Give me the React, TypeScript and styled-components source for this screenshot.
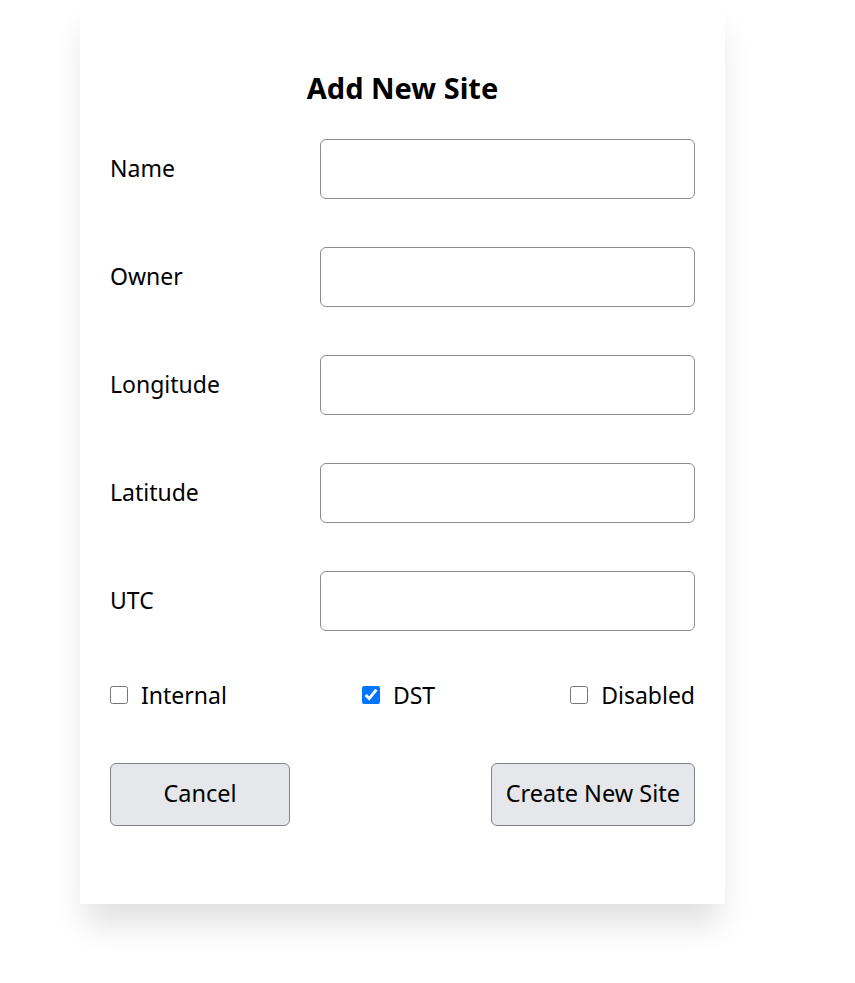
import React from "react";
import styled, { createGlobalStyle } from "styled-components";

const GlobalStyle = createGlobalStyle`
  html, body {
    margin: 0;
    padding: 0;
    background: #ffffff;
    font-family: "Noto Sans", "Open Sans", sans-serif;
    color: #000;
  }
`;

const Page = styled.div`
  padding: 0 0 79px 80px;
  width: 645px;
`;

const Card = styled.form`
  width: 645px;
  box-sizing: border-box;
  background: #fff;
  padding: 70px 30px 78px;
  box-shadow: 0 25px 30px -5px rgba(0, 0, 0, 0.12);
  display: flex;
  flex-direction: column;
`;

const Title = styled.h2`
  margin: 0 0 33px;
  font-size: 29px;
  line-height: 36px;
  font-weight: 700;
  text-align: center;
`;

const Fields = styled.div`
  display: grid;
  grid-template-columns: 1fr 375px;
  row-gap: 48px;
  align-items: center;
`;

const Label = styled.label`
  font-size: 23px;
  line-height: 30px;
  margin-top: -3px;
`;

const Input = styled.input`
  box-sizing: border-box;
  width: 375px;
  height: 60px;
  border: 1px solid #8c8c8c;
  border-radius: 6px;
  padding: 0 12px;
  font: inherit;
  font-size: 20px;
  background: #fff;
  outline: none;
`;

const Checks = styled.div`
  margin-top: 49px;
  display: flex;
  justify-content: space-between;
  align-items: center;
  height: 30px;
`;

const CheckLabel = styled.label`
  display: flex;
  align-items: center;
  gap: 13px;
  font-size: 23px;
  line-height: 30px;
`;

const Box = styled.input`
  margin: 0;
  width: 18px;
  height: 18px;
`;

const Actions = styled.div`
  margin-top: 53px;
  display: flex;
  justify-content: space-between;
`;

const Button = styled.button`
  box-sizing: border-box;
  min-width: 180px;
  height: 63px;
  padding: 0 14px 3px;
  background: #e5e7eb;
  border: 1px solid #80838a;
  border-radius: 6px;
  font: inherit;
  font-size: 23.5px;
  color: #000;
  cursor: pointer;
`;

const fields = ["Name", "Owner", "Longitude", "Latitude", "UTC"];

export default function App() {
  return (
    <>
      <GlobalStyle />
      <Page>
        <Card onSubmit={(e) => e.preventDefault()}>
          <Title>Add New Site</Title>
          <Fields>
            {fields.map((f) => (
              <React.Fragment key={f}>
                <Label htmlFor={f}>{f}</Label>
                <Input id={f} type="text" />
              </React.Fragment>
            ))}
          </Fields>
          <Checks>
            <CheckLabel>
              <Box type="checkbox" />
              Internal
            </CheckLabel>
            <CheckLabel>
              <Box type="checkbox" defaultChecked />
              DST
            </CheckLabel>
            <CheckLabel>
              <Box type="checkbox" />
              Disabled
            </CheckLabel>
          </Checks>
          <Actions>
            <Button type="button">Cancel</Button>
            <Button type="submit">Create New Site</Button>
          </Actions>
        </Card>
      </Page>
    </>
  );
}
